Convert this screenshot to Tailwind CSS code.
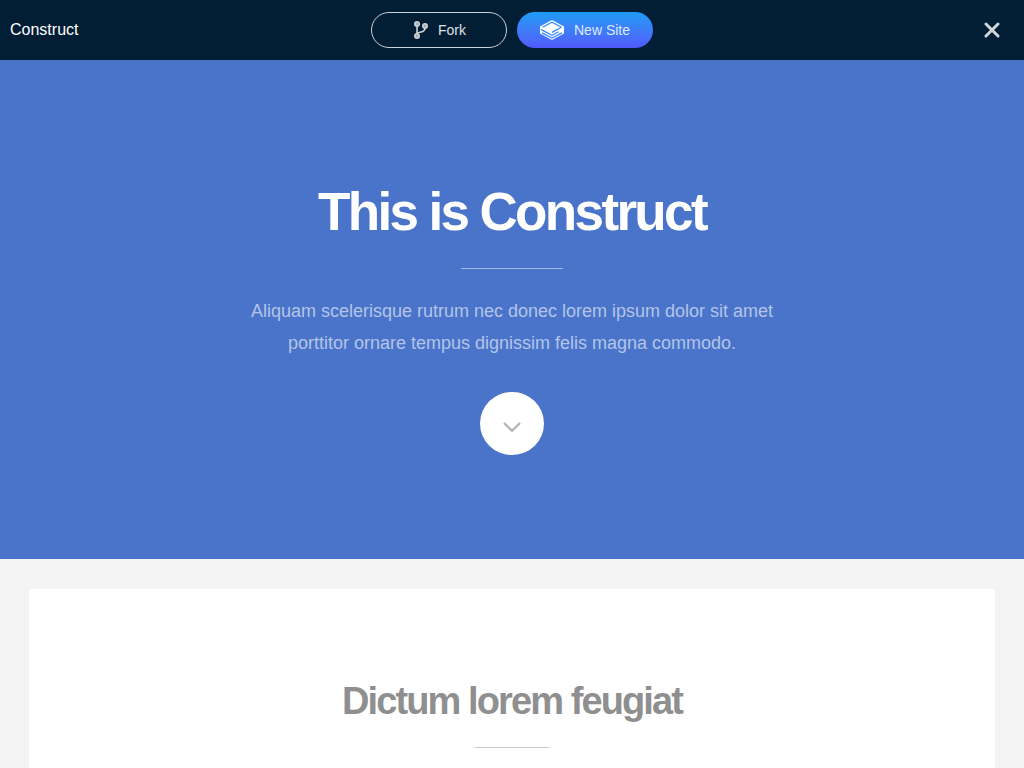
<!DOCTYPE html>
<html lang="en">
<head>
<meta charset="utf-8">
<meta name="viewport" content="width=device-width, initial-scale=1">
<title>Construct</title>
<script src="https://cdn.jsdelivr.net/npm/@tailwindcss/browser@4"></script>
</head>
<body class="min-h-screen bg-[#f4f4f4] font-['Liberation_Sans',Arial,sans-serif]">
<header class="grid h-15 grid-cols-[1fr_auto_1fr] items-center bg-[#021e34] px-2.5 text-white">
  <p class="text-base">Construct</p>
  <div class="flex gap-2.5">
    <button type="button" class="flex h-9 w-34 items-center justify-center gap-2 rounded-full border border-[#ccd2d6] pr-0.5 text-sm text-[#dde1e4]">
      <svg class="h-5 w-5" viewBox="0 0 20 20" fill="none" stroke="#ccd2d6" stroke-width="1.600" aria-hidden="true">
        <g fill="#a3adb6"><circle cx="7" cy="4" r="2.200"/><circle cx="7" cy="16" r="2.200"/><circle cx="15" cy="6" r="2.200"/></g>
        <path d="M7 6v8M15 8c0 3-1.500 3.500-4 4-2.500.500-4 .500-4 2"/>
      </svg>
      Fork
    </button>
    <button type="button" class="flex h-9 w-34 items-center justify-center gap-2.5 rounded-full bg-linear-to-b from-[#189bf5] to-[#4f59fb] text-sm text-[#dbe9fe]">
      <svg class="h-5 w-6" viewBox="0 0 24 20" aria-hidden="true">
        <path d="M12 0 24 6.500v7L12 20 0 13.500v-7z" fill="#fff"/>
        <path d="M2.500 7.300 12 2.100l9.500 5.200M1.200 9.600 12 15.300l6.500-3.500M2 12.900l10 5.200 10-5.200M21.500 7.300 12 12.400" fill="none" stroke="#3288f7" stroke-width="1.200"/>
      </svg>
      New Site
    </button>
  </div>
  <button type="button" aria-label="Close" class="mr-3.5 flex size-4 items-center justify-center justify-self-end">
    <svg class="size-4" viewBox="0 0 16 16" stroke="#d2d6da" stroke-width="3" stroke-linecap="round" aria-hidden="true"><path d="m2 2 12 12m0-12L2 14"/></svg>
  </button>
</header>
<main>
  <section class="flex flex-col items-center bg-[#4974c9] px-6 pt-30 pb-26 text-center">
    <h1 class="text-[53px] leading-16 font-bold tracking-tighter text-white">This is Construct</h1>
    <hr class="mt-6 w-[102px] border-[#a4b9e4]">
    <p class="mt-6.5 max-w-[560px] text-lg leading-8 text-[#b3c4e8]">Aliquam scelerisque rutrum nec donec lorem ipsum dolor sit amet porttitor ornare tempus dignissim felis magna commodo.</p>
    <a href="#first" aria-label="Continue" class="mt-[33px] flex h-[63px] w-16 items-center justify-center rounded-full bg-white">
      <svg class="mt-1.5 h-3 w-5" viewBox="0 0 20 12" fill="none" stroke="#b2b2b2" stroke-width="2.200" aria-hidden="true"><path d="m2 2 8 7.700L18 2"/></svg>
    </a>
  </section>
  <div class="px-[29px] pt-[30px]">
    <section id="first" class="flex flex-col items-center rounded-xs bg-white px-6 pt-22 pb-24 text-center">
      <h2 class="text-[38px] leading-12 font-bold tracking-tighter text-[#8f8f8f]">Dictum lorem feugiat</h2>
      <hr class="mt-5.5 w-[74px] border-[#c7c7c7]">
    </section>
  </div>
</main>
</body>
</html>
